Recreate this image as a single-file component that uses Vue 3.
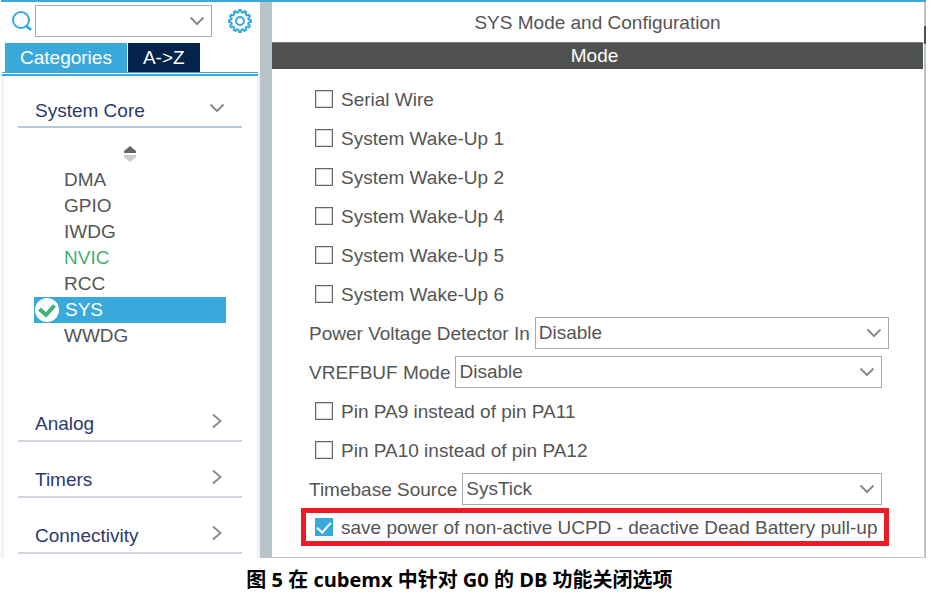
<script setup>
import { ref } from 'vue'

const search = ref('')
const peripherals = [
  { name: 'DMA' },
  { name: 'GPIO' },
  { name: 'IWDG' },
  { name: 'NVIC', configured: true },
  { name: 'RCC' },
  { name: 'SYS', selected: true },
  { name: 'WWDG' },
]
const collapsed = ['Analog', 'Timers', 'Connectivity']
const rows = ref([
  { id: 'serial', label: 'Serial Wire', type: 'check', on: false },
  { id: 'wake1', label: 'System Wake-Up 1', type: 'check', on: false },
  { id: 'wake2', label: 'System Wake-Up 2', type: 'check', on: false },
  { id: 'wake4', label: 'System Wake-Up 4', type: 'check', on: false },
  { id: 'wake5', label: 'System Wake-Up 5', type: 'check', on: false },
  { id: 'wake6', label: 'System Wake-Up 6', type: 'check', on: false },
  { id: 'pvd', label: 'Power Voltage Detector In', type: 'select', value: 'Disable', wide: true },
  { id: 'vref', label: 'VREFBUF Mode', type: 'select', value: 'Disable' },
  { id: 'pa9', label: 'Pin PA9 instead of pin PA11', type: 'check', on: false },
  { id: 'pa10', label: 'Pin PA10 instead of pin PA12', type: 'check', on: false },
  { id: 'timebase', label: 'Timebase Source', type: 'select', value: 'SysTick' },
  { id: 'ucpd', label: 'save power of non-active UCPD - deactive Dead Battery pull-up', type: 'check', on: true, marked: true },
])

// Outline of a gear with evenly spaced teeth
function gearPath(teeth, outer, inner) {
  const step = (Math.PI * 2) / teeth
  const points = []
  for (let i = 0; i < teeth; i++) {
    const mid = i * step - Math.PI / 2
    for (const [r, offset] of [[inner, -0.32], [outer, -0.17], [outer, 0.17], [inner, 0.32]]) {
      const a = mid + offset * step
      points.push(`${(12 + r * Math.cos(a)).toFixed(2)} ${(12 + r * Math.sin(a)).toFixed(2)}`)
    }
  }
  return `M${points.join('L')}Z`
}
const gear = gearPath(12, 11, 8.8)
</script>

<template>
  <figure class="figure">
    <div class="window">
      <aside class="sidebar">
        <div class="search">
          <svg class="search-icon" viewBox="0 0 22 22" aria-hidden="true">
            <circle cx="10" cy="10" r="8" />
            <path class="handle" d="M15 15.5 L20 20" />
          </svg>
          <div class="combo">
            <input v-model="search" type="text" aria-label="Search" />
            <button type="button" aria-label="Show matches">
              <svg class="chevron" viewBox="0 0 16 10" aria-hidden="true"><path d="M1.5 1.5 L8 8 L14.5 1.5" /></svg>
            </button>
          </div>
          <button class="gear" type="button" aria-label="Settings">
            <svg viewBox="0 0 24 24" aria-hidden="true">
              <path :d="gear" />
              <circle cx="12" cy="12" r="4" />
            </svg>
          </button>
        </div>
        <div class="tabs">
          <button class="tab active" type="button">Categories</button>
          <button class="tab" type="button">A-&gt;Z</button>
        </div>
        <div class="tree">
          <section class="group open">
            <button class="group-head" type="button">
              <span>System Core</span>
              <svg class="chevron" viewBox="0 0 16 10" aria-hidden="true"><path d="M1.5 1.5 L8 8 L14.5 1.5" /></svg>
            </button>
            <svg class="sorter" viewBox="0 0 12 16" aria-hidden="true">
              <path class="up" d="M6 0 L12 5 V7 H0 V5 Z" />
              <path class="down" d="M0 9 H12 V11 L6 16 L0 11 Z" />
            </svg>
            <ul class="items">
              <li v-for="p in peripherals" :key="p.name">
                <a href="#" :class="{ selected: p.selected, configured: p.configured }">
                  <svg v-if="p.selected" class="badge" viewBox="0 0 24 24" aria-hidden="true">
                    <circle cx="12" cy="12" r="12" />
                    <path d="M4.5 11 L11 17 L19.5 7.5" />
                  </svg>
                  <span>{{ p.name }}</span>
                </a>
              </li>
            </ul>
          </section>
          <section v-for="name in collapsed" :key="name" class="group">
            <button class="group-head" type="button">
              <span>{{ name }}</span>
              <svg class="chevron-right" viewBox="0 0 10 16" aria-hidden="true"><path d="M1 1.5 L8.5 8 L1 14.5" /></svg>
            </button>
          </section>
        </div>
      </aside>
      <div class="divider"></div>
      <main class="main">
        <h1>SYS Mode and Configuration</h1>
        <h2>Mode</h2>
        <form class="form" @submit.prevent>
          <template v-for="r in rows" :key="r.id">
            <div v-if="r.type === 'check'" class="row check" :class="{ marked: r.marked }">
              <input :id="r.id" v-model="r.on" type="checkbox" />
              <label :for="r.id">{{ r.label }}</label>
            </div>
            <div v-else class="row pick" :class="{ wide: r.wide }">
              <label :for="r.id">{{ r.label }}</label>
              <div class="select">
                <select :id="r.id" v-model="r.value">
                  <option>{{ r.value }}</option>
                </select>
                <svg class="chevron" viewBox="0 0 16 10" aria-hidden="true"><path d="M1.5 1.5 L8 8 L14.5 1.5" /></svg>
              </div>
            </div>
          </template>
        </form>
      </main>
      <div class="scroll"><div class="thumb"></div></div>
    </div>
    <figcaption>图 5 在 cubemx 中针对 G0 的 DB 功能关闭选项</figcaption>
  </figure>
</template>

<style>
body {
  margin: 0;
  background: #fff;
}
</style>

<style scoped>
* {
  box-sizing: border-box;
}
.figure {
  margin: 0 8px 0 1px;
  font: 19px/26px "Liberation Sans", Arial, sans-serif;
  color: #555;
}
button,
input,
select {
  margin: 0;
  padding: 0;
  border: 0;
  background: none;
  font: inherit;
  color: inherit;
}
.window {
  display: flex;
  border-top: 2px solid #39a9dc;
}
.sidebar {
  flex: 0 0 28%;
  min-width: 0;
  display: flex;
  flex-direction: column;
}
.search {
  display: flex;
  align-items: center;
  padding: 3px 8px 0 10px;
}
.search-icon {
  flex: none;
  width: 22px;
  height: 22px;
  margin-right: 2px;
  fill: none;
  stroke: #39a9dc;
  stroke-width: 2;
}
.search-icon .handle {
  stroke-width: 3;
}
.combo {
  flex: 1;
  min-width: 0;
  display: flex;
  align-items: center;
  height: 32px;
  padding-right: 6px;
  border: 1px solid #a4abaf;
}
.combo input {
  flex: 1;
  min-width: 0;
  outline: 0;
}
.combo button {
  display: flex;
}
.chevron {
  width: 16px;
  height: 10px;
}
.chevron-right {
  width: 10px;
  height: 16px;
}
.chevron,
.chevron-right {
  flex: none;
  fill: none;
  stroke: #8c8c8c;
  stroke-width: 2;
}
.gear {
  display: flex;
  margin-left: 16px;
}
.gear svg {
  width: 24px;
  height: 24px;
  fill: none;
  stroke: #39a9dc;
  stroke-width: 2;
  stroke-linejoin: round;
}
.tabs {
  display: flex;
  gap: 1px;
  margin: 6px 2px 0 1px;
  padding-left: 3px;
  border-bottom: 1px solid #39a9dc;
}
.tab {
  height: 29px;
  padding: 0 15px;
  background: #03234b;
  color: #fff;
}
.tab.active {
  background: #39a9dc;
}
.tree {
  flex: 1;
  margin-top: 1px;
  padding: 24px 15px 4px 14px;
  border: solid #eff2f5;
  border-width: 0 3px;
  position: relative;
}
.tree::before {
  content: "";
  position: absolute;
  top: 0;
  left: -2px;
  right: -1px;
  height: 2px;
  background: #39a9dc;
}
.group-head {
  display: flex;
  justify-content: space-between;
  align-items: center;
  width: 100%;
  height: 56px;
  padding: 24px 20px 2px 17px;
  border-bottom: 2px solid #cfd5e0;
  color: #2b3a70;
}
.group-head svg {
  margin-bottom: 6px;
}
.open .group-head {
  height: 30px;
  padding: 0 17px 2px;
  border-color: #b4c8de;
}
.open {
  padding-bottom: 37px;
}
.sorter {
  display: block;
  width: 12px;
  height: 16px;
  margin: 18px auto 5px;
}
.up {
  fill: #666;
}
.down {
  fill: #ccc;
}
.items {
  margin: 0;
  padding: 0 16px;
  list-style: none;
}
.items a {
  display: flex;
  align-items: center;
  height: 26px;
  padding-left: 30px;
  color: #555;
  text-decoration: none;
}
.items .configured {
  color: #43b073;
}
.items .selected {
  gap: 6px;
  padding-left: 1px;
  background: #39a9dc;
  color: #fff;
}
.badge {
  width: 24px;
  height: 24px;
  fill: #fff;
}
.badge path {
  fill: none;
  stroke: #43b073;
  stroke-width: 4;
}
.divider {
  flex: 0 0 12px;
  background: #b8c4ca;
}
.main {
  flex: 1;
  min-width: 0;
  border-bottom: 1px solid #b8c4ca;
}
h1,
h2 {
  margin: 0;
  font-size: 19px;
  font-weight: 400;
  text-align: center;
}
h1 {
  padding: 8px 0 6px;
}
h2 {
  padding-right: 6px;
  border-top: 1px solid #777;
  background: #505250;
  color: #fff;
  line-height: 26px;
}
.form {
  padding: 10px 34px 10px 30px;
}
.row {
  display: flex;
  align-items: center;
  height: 39px;
}
.row label {
  flex: none;
  padding-top: 2px;
}
.check {
  gap: 8px;
  padding-left: 13px;
}
.check input {
  appearance: none;
  flex: none;
  width: 18px;
  height: 18px;
  border: 1px solid #666;
  outline: 1px solid #d8d8d8;
  outline-offset: -2px;
}
.check input:checked {
  border: 0;
  outline: 0;
  background: #39a9dc;
  display: grid;
  place-items: center;
}
.check input:checked::before {
  content: "";
  width: 6px;
  height: 12px;
  margin-bottom: 3px;
  border: solid #fff;
  border-width: 0 2px 2px 0;
  rotate: 42deg;
}
.marked {
  height: 38px;
  margin-left: -1px;
  padding-left: 9px;
  border: 5px solid #ed1c24;
  white-space: nowrap;
}
.pick {
  gap: 5px;
  padding: 0 7px;
}
.wide {
  padding-right: 0;
}
.select {
  flex: 1;
  position: relative;
}
.select select {
  display: block;
  appearance: none;
  width: 100%;
  height: 32px;
  padding-left: 3px;
  border: 1px solid #a4abaf;
}
.select .chevron {
  position: absolute;
  right: 7px;
  top: 11px;
  pointer-events: none;
}
.scroll {
  flex: 0 0 2px;
  margin-left: 1px;
  background: #b8c4ca;
}
.thumb {
  height: 18px;
  margin-top: 24px;
  background: #505250;
}
figcaption {
  padding: 8px 8px 0 0;
  font: bold 20px/28px "Open Sans", "Noto Sans CJK SC", sans-serif;
  color: #000;
  text-align: center;
}
</style>
